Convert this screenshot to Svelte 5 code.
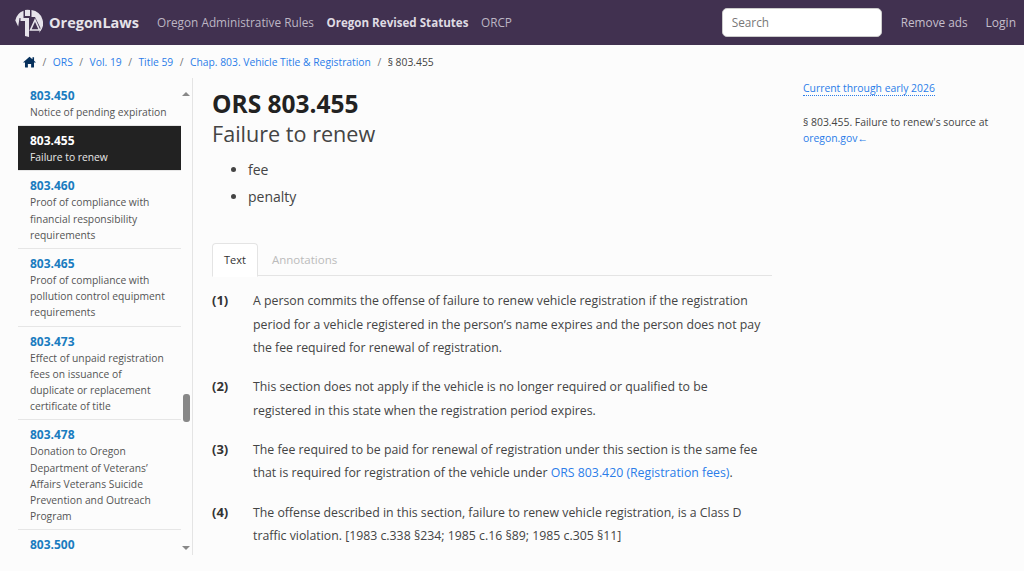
<script>
  const sections = [
    { num: "803.450", title: "Notice of pending expiration" },
    { num: "803.455", title: "Failure to renew", active: true },
    { num: "803.460", title: "Proof of compliance with financial responsibility requirements" },
    { num: "803.465", title: "Proof of compliance with pollution control equipment requirements" },
    { num: "803.473", title: "Effect of unpaid registration fees on issuance of duplicate or replacement certificate of title" },
    { num: "803.478", title: "Donation to Oregon Department of Veterans’ Affairs Veterans Suicide Prevention and Outreach Program" },
    { num: "803.500", title: "" },
  ];
  const crumbs = ["ORS", "Vol. 19", "Title 59", "Chap. 803. Vehicle Title & Registration"];
</script>

<nav class="navbar">
  <a class="brand" href="#top">
    <svg width="28" height="28" viewBox="0 0 28 28" class="logo">
      <g fill="#e6e3ea">
        <path d="M8.5 1.8A13 13 0 0 0 0.3 11.5L3.2 17.5L4.5 9H8.5Z" />
        <path d="M10 1Q12.5 0.5 15 1V7H10Z" />
        <path d="M5.5 9H14V28L10 27V12H5.5Z" />
        <path d="M16.5 1A13.5 13.5 0 0 1 24 24L25.5 19L20 8H16.5Z" />
      </g>
      <path d="M20 11L15.5 21H24.5Z" fill="none" stroke="#e6e3ea" stroke-width="1.6" />
    </svg>
    <span>OregonLaws</span>
  </a>
  <div class="links">
    <a href="#top">Oregon Administrative Rules</a>
    <a href="#top" class="current">Oregon Revised Statutes</a>
    <a href="#top">ORCP</a>
  </div>
  <input class="search" type="text" placeholder="Search" />
  <a class="right-link" href="#top">Remove ads</a>
  <a class="right-link" href="#top">Login</a>
</nav>

<div class="crumbs">
  <svg width="13" height="12" viewBox="0 0 576 512" class="home">
    <path fill="#06305c" d="M288 20L420 135V50H490V196L566 262Q576 274 562 282H488V480Q488 496 472 496H360V340H216V496H104Q88 496 88 480V282H14Q0 274 10 262Z" />
  </svg>
  {#each crumbs as c}
    <span class="sep">/</span>
    <a href="#top">{c}</a>
  {/each}
  <span class="sep">/</span>
  <span class="here">§ 803.455</span>
</div>

<div class="page">
  <aside class="sidebar">
    <div class="list">
      {#each sections as s}
        <div class="item" class:active={s.active}>
          <div class="num">{s.num}</div>
          {#if s.title}<div class="title">{s.title}</div>{/if}
        </div>
      {/each}
    </div>
    <div class="scroll">
      <span class="arrow up"></span>
      <span class="thumb"></span>
      <span class="arrow down"></span>
    </div>
  </aside>

  <main class="content">
    <h1>ORS 803.455</h1>
    <h2>Failure to renew</h2>
    <ul>
      <li>fee</li>
      <li>penalty</li>
    </ul>

    <div class="tabs">
      <span class="tab on">Text</span>
      <span class="tab">Annotations</span>
    </div>

    <div class="para">
      <b>(1)</b>
      <p>A person commits the offense of failure to renew vehicle registration if the registration period for a vehicle registered in the person’s name expires and the person does not pay the fee required for renewal of registration.</p>
    </div>
    <div class="para">
      <b>(2)</b>
      <p>This section does not apply if the vehicle is no longer required or qualified to be registered in this state when the registration period expires.</p>
    </div>
    <div class="para">
      <b>(3)</b>
      <p>The fee required to be paid for renewal of registration under this section is the same fee that is required for registration of the vehicle under <a href="#top">ORS 803.420 (Registration fees)</a>.</p>
    </div>
    <div class="para">
      <b>(4)</b>
      <p>The offense described in this section, failure to renew vehicle registration, is a Class D traffic violation. [1983 c.338 §234; 1985 c.16 §89; 1985 c.305 §11]</p>
    </div>
  </main>

  <aside class="info">
    <a class="current-through" href="#top">Current through early 2026</a>
    <p>§ 803.455. Failure to renew's source at <a href="#top">oregon.gov</a><span class="back"> ←</span></p>
  </aside>
</div>

<style>
  :global(body) {
    background: #fcfcfc;
    font-family: "Open Sans", "Noto Sans", sans-serif;
    color: #333;
    overflow: hidden;
  }
  a {
    text-decoration: none;
    color: #2b7ce9;
  }
  .navbar {
    display: flex;
    align-items: center;
    height: 45px;
    background: #413150;
    padding: 0 8px 0 15px;
    font-size: 11.8px;
  }
  .brand {
    display: flex;
    align-items: center;
    gap: 6px;
    color: #e6e3ea;
    font-weight: 700;
    font-size: 14.5px;
    width: 142px;
  }
  .logo {
    flex: none;
  }
  .links {
    display: flex;
    align-items: center;
    gap: 12.5px;
    flex: 1;
    padding-bottom: 1px;
  }
  .links a {
    color: #bdb6c4;
  }
  .links a.current {
    color: #dfdbe3;
    font-weight: 700;
    font-size: 11.6px;
  }
  .search {
    width: 160px;
    height: 29px;
    box-sizing: border-box;
    border: 1px solid #ccc;
    border-radius: 5px;
    padding: 0 9px 2px;
    font: inherit;
    background: #fff;
    margin-right: 19px;
  }
  .search::placeholder {
    color: #777;
  }
  .right-link {
    color: #c5bfcb;
    padding-bottom: 1px;
  }
  .right-link:last-child {
    margin-left: 18px;
    font-size: 12px;
  }
  .crumbs {
    display: flex;
    align-items: center;
    height: 33px;
    padding-left: 23px;
    font-size: 10.3px;
    gap: 6.5px;
    color: #444;
  }
  .crumbs .sep {
    color: #777;
  }
  .page {
    display: grid;
    grid-template-columns: 193px 579px 1fr;
  }
  .sidebar {
    display: flex;
    height: 477px;
    padding-left: 18px;
    box-sizing: border-box;
    border-right: 1px solid #e4e4e4;
    overflow: hidden;
  }
  .list {
    width: 163px;
    flex: none;
    padding-top: 3px;
  }
  .item {
    padding: 6px 13.5px 5px 12px;
    border-bottom: 1px solid #e6e6e6;
    font-size: 10.3px;
    line-height: 16.2px;
    color: #555;
  }
  .num {
    font-size: 12px;
    font-weight: 700;
    color: #1a7cc0;
    line-height: 17px;
  }
  .item.active {
    background: #222;
    color: #e8e8e8;
  }
  .item.active .num {
    color: #fff;
  }
  .scroll {
    flex: 1;
    position: relative;
  }
  .arrow {
    position: absolute;
    left: 1px;
    width: 0;
    height: 0;
    border-left: 4px solid transparent;
    border-right: 4px solid transparent;
  }
  .arrow.up {
    top: 14px;
    border-bottom: 4px solid #888;
  }
  .arrow.down {
    bottom: 5px;
    border-top: 4px solid #888;
  }
  .thumb {
    position: absolute;
    left: 2px;
    top: 316px;
    width: 7px;
    height: 28px;
    background: #888;
    border-radius: 3px;
  }
  .content {
    padding: 11px 0 0 19px;
  }
  h1 {
    margin: 0;
    font-size: 24.5px;
    line-height: 30px;
    color: #222;
  }
  h2 {
    margin: 0;
    font-size: 21.6px;
    line-height: 29px;
    font-weight: 400;
    color: #444;
  }
  ul {
    margin: 8px 0 0;
    padding-left: 36px;
    font-size: 14px;
    line-height: 27px;
    color: #444;
  }
  .tabs {
    display: flex;
    margin-top: 33px;
    height: 32px;
    border-bottom: 1px solid #e4e4e4;
    font-size: 11.5px;
  }
  .tab {
    padding: 0 14px;
    line-height: 34px;
    color: #bbb;
  }
  .tab.on {
    padding: 0 11px;
    font-size: 11px;
    line-height: 32px;
    color: #333;
    background: #fff;
    border: 1px solid #e4e4e4;
    border-bottom: 1px solid #fff;
    border-radius: 4px 4px 0 0;
    height: 32px;
  }
  .para {
    display: flex;
    margin-top: 15.7px;
    font-size: 12.3px;
    line-height: 23.5px;
  }
  .tabs + .para {
    margin-top: 13px;
  }
  .para b {
    width: 41px;
    flex: none;
    font-size: 13px;
    color: #333;
  }
  .para p {
    margin: 0;
    width: 510px;
    color: #444;
  }
  .info {
    padding: 2px 0 0 31px;
    font-size: 10.4px;
    line-height: 16px;
  }
  .current-through {
    border-bottom: 1px dotted #2b7ce9;
  }
  .info p {
    margin: 18px 0 0;
    color: #444;
    width: 195px;
  }
  .back {
    color: #2b7ce9;
  }
</style>
